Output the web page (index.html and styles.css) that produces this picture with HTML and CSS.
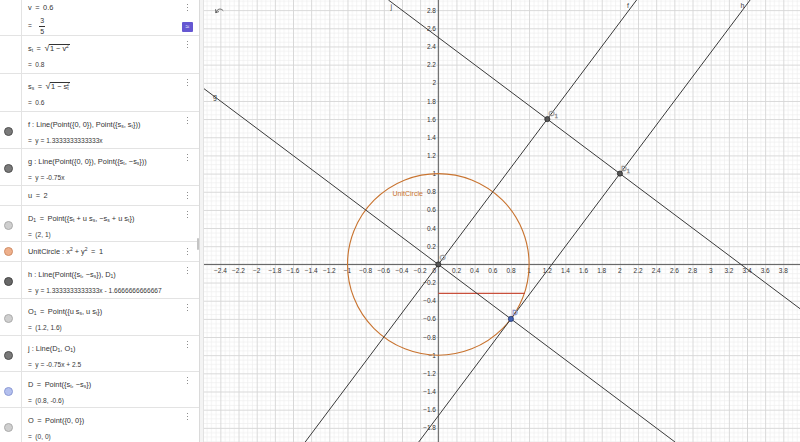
FILE: index.html
```html
<!DOCTYPE html>
<html>
<head>
<meta charset="utf-8">
<link rel="stylesheet" href="styles.css">
</head>
<body>
<div class="app">
  <div class="algebra">
    <div class="row r-first">
      <div class="marble"></div>
      <div class="content">
        <div class="line">v<span class="rel">=</span>0.6</div>
        <div class="line frac-line"><span class="eq">=</span><span class="frac"><span class="num">3</span><span class="den">5</span></span></div>
      </div>
      <div class="menu"><span class="dots"><i></i><i></i><i></i></span><span class="approx">≈</span></div>
    </div>
    <div class="row r-two r-tall">
      <div class="marble"></div>
      <div class="content">
        <div class="line">s<sub>t</sub><span class="rel">=</span><span class="sqrt"><span class="rad">√</span><span class="radicand">1 − v<sup>2</sup></span></span></div>
        <div class="line val"><span class="eq">=</span>0.8</div>
      </div>
      <div class="menu"><span class="dots"><i></i><i></i><i></i></span></div>
    </div>
    <div class="row r-two r-tall">
      <div class="marble"></div>
      <div class="content">
        <div class="line">s<sub>s</sub><span class="rel">=</span><span class="sqrt"><span class="rad">√</span><span class="radicand">1 − s<sub class="subsup">t</sub><sup class="supsub">2</sup></span></span></div>
        <div class="line val"><span class="eq">=</span>0.6</div>
      </div>
      <div class="menu"><span class="dots"><i></i><i></i><i></i></span></div>
    </div>
    <div class="row r-two">
      <div class="marble"><i class="m-dark"></i></div>
      <div class="content">
        <div class="line">f : Line(Point({0, 0}), Point({s<sub>s</sub>, s<sub>t</sub>}))</div>
        <div class="line val"><span class="eq">=</span>y = 1.3333333333333x</div>
      </div>
      <div class="menu"><span class="dots"><i></i><i></i><i></i></span></div>
    </div>
    <div class="row r-two">
      <div class="marble"><i class="m-dark"></i></div>
      <div class="content">
        <div class="line">g : Line(Point({0, 0}), Point({s<sub>t</sub>, −s<sub>s</sub>}))</div>
        <div class="line val"><span class="eq">=</span>y = -0.75x</div>
      </div>
      <div class="menu"><span class="dots"><i></i><i></i><i></i></span></div>
    </div>
    <div class="row r-one">
      <div class="marble"></div>
      <div class="content">
        <div class="line">u<span class="rel">=</span>2</div>
      </div>
      <div class="menu"><span class="dots"><i></i><i></i><i></i></span></div>
    </div>
    <div class="row r-two r-short">
      <div class="marble"><i class="m-light"></i></div>
      <div class="content">
        <div class="line">D<sub>1</sub><span class="rel">=</span>Point({s<sub>t</sub> + u s<sub>s</sub>, −s<sub>s</sub> + u s<sub>t</sub>})</div>
        <div class="line val"><span class="eq">=</span>(2, 1)</div>
      </div>
      <div class="menu"><span class="dots"><i></i><i></i><i></i></span></div>
    </div>
    <div class="row r-one">
      <div class="marble"><i class="m-orange"></i></div>
      <div class="content">
        <div class="line">UnitCircle : x<sup>2</sup> + y<sup>2</sup><span class="rel">=</span>1</div>
      </div>
      <div class="menu"><span class="dots"><i></i><i></i><i></i></span></div>
    </div>
    <div class="row r-two">
      <div class="marble"><i class="m-darker"></i></div>
      <div class="content">
        <div class="line">h : Line(Point({s<sub>t</sub>, −s<sub>s</sub>}), D<sub>1</sub>)</div>
        <div class="line val"><span class="eq">=</span>y = 1.3333333333333x - 1.6666666666667</div>
      </div>
      <div class="menu"><span class="dots"><i></i><i></i><i></i></span></div>
    </div>
    <div class="row r-two">
      <div class="marble"><i class="m-light"></i></div>
      <div class="content">
        <div class="line">O<sub>1</sub><span class="rel">=</span>Point({u s<sub>s</sub>, u s<sub>t</sub>})</div>
        <div class="line val"><span class="eq">=</span>(1.2, 1.6)</div>
      </div>
      <div class="menu"><span class="dots"><i></i><i></i><i></i></span></div>
    </div>
    <div class="row r-two r-short">
      <div class="marble"><i class="m-dark"></i></div>
      <div class="content">
        <div class="line">j : Line(D<sub>1</sub>, O<sub>1</sub>)</div>
        <div class="line val"><span class="eq">=</span>y = -0.75x + 2.5</div>
      </div>
      <div class="menu"><span class="dots"><i></i><i></i><i></i></span></div>
    </div>
    <div class="row r-two r-short">
      <div class="marble"><i class="m-blue"></i></div>
      <div class="content">
        <div class="line">D<span class="rel">=</span>Point({s<sub>t</sub>, −s<sub>s</sub>})</div>
        <div class="line val"><span class="eq">=</span>(0.8, -0.6)</div>
      </div>
      <div class="menu"><span class="dots"><i></i><i></i><i></i></span></div>
    </div>
    <div class="row r-two r-last">
      <div class="marble"><i class="m-light"></i></div>
      <div class="content">
        <div class="line">O<span class="rel">=</span>Point({0, 0})</div>
        <div class="line val"><span class="eq">=</span>(0, 0)</div>
      </div>
      <div class="menu"><span class="dots"><i></i><i></i><i></i></span></div>
    </div>
    <span class="scroll-thumb"></span>
  </div>
  <div class="divider"></div>
  <div class="graphics">
    <svg class="plot" width="596" height="442" viewBox="204 0 596 442" xmlns="http://www.w3.org/2000/svg">
      <defs>
        <pattern id="grid" patternUnits="userSpaceOnUse" x="438.3" y="264.4" width="18.16" height="18.16">
          <rect x="4.54" y="0" width="0.6" height="18.16" fill="#ececec"/>
          <rect x="9.08" y="0" width="0.6" height="18.16" fill="#ececec"/>
          <rect x="13.62" y="0" width="0.6" height="18.16" fill="#ececec"/>
          <rect x="0" y="4.54" width="18.16" height="0.6" fill="#ececec"/>
          <rect x="0" y="9.08" width="18.16" height="0.6" fill="#ececec"/>
          <rect x="0" y="13.62" width="18.16" height="0.6" fill="#ececec"/>
          <rect x="0" y="0" width="0.9" height="18.16" fill="#d6d6d6"/>
          <rect x="0" y="0" width="18.16" height="0.9" fill="#d6d6d6"/>
        </pattern>
      </defs>
      <rect x="204" y="0" width="596" height="442" fill="#fff"/>
      <rect x="204" y="0" width="596" height="442" fill="url(#grid)"/>

      <line class="axis" x1="204" y1="264.4" x2="800" y2="264.4"/>
      <line class="axis" x1="438.3" y1="0" x2="438.3" y2="442"/>

      <g class="xlab">
        <text x="220.4" y="270">−2.4</text>
        <text x="238.5" y="270">−2.2</text>
        <text x="256.7" y="270">−2</text>
        <text x="274.9" y="270">−1.8</text>
        <text x="293.0" y="270">−1.6</text>
        <text x="311.2" y="270">−1.4</text>
        <text x="329.3" y="270">−1.2</text>
        <text x="347.5" y="270">−1</text>
        <text x="365.7" y="270">−0.8</text>
        <text x="383.8" y="270">−0.6</text>
        <text x="402.0" y="270">−0.4</text>
        <text x="420.1" y="270">−0.2</text>
        <text x="456.5" y="270">0.2</text>
        <text x="474.6" y="270">0.4</text>
        <text x="492.8" y="270">0.6</text>
        <text x="511.0" y="270">0.8</text>
        <text x="529.1" y="270">1</text>
        <text x="547.3" y="270">1.2</text>
        <text x="565.4" y="270">1.4</text>
        <text x="583.6" y="270">1.6</text>
        <text x="601.7" y="270">1.8</text>
        <text x="619.9" y="270">2</text>
        <text x="638.1" y="270">2.2</text>
        <text x="656.2" y="270">2.4</text>
        <text x="674.4" y="270">2.6</text>
        <text x="692.5" y="270">2.8</text>
        <text x="710.7" y="270">3</text>
        <text x="728.9" y="270">3.2</text>
        <text x="747.0" y="270">3.4</text>
        <text x="765.2" y="270">3.6</text>
        <text x="783.3" y="270">3.8</text>
      </g>
      <g class="ylab">
        <text x="436" y="270">0</text>
        <text x="436" y="10.2">2.8</text>
        <text x="436" y="28.3">2.6</text>
        <text x="436" y="46.5">2.4</text>
        <text x="436" y="64.6">2.2</text>
        <text x="436" y="82.8">2</text>
        <text x="436" y="101.0">1.8</text>
        <text x="436" y="119.1">1.6</text>
        <text x="436" y="137.3">1.4</text>
        <text x="436" y="155.4">1.2</text>
        <text x="436" y="173.6">1</text>
        <text x="436" y="191.8">0.8</text>
        <text x="436" y="209.9">0.6</text>
        <text x="436" y="228.1">0.4</text>
        <text x="436" y="246.2">0.2</text>
        <text x="436" y="282.6">−0.2</text>
        <text x="436" y="300.7">−0.4</text>
        <text x="436" y="318.9">−0.6</text>
        <text x="436" y="337.0">−0.8</text>
        <text x="436" y="355.2">−1</text>
        <text x="436" y="373.4">−1.2</text>
        <text x="436" y="391.5">−1.4</text>
        <text x="436" y="409.7">−1.6</text>
        <text x="436" y="427.8">−1.8</text>
      </g>

      <circle class="unit" cx="438.3" cy="264.4" r="90.8"/>
      <line class="seg" x1="438.3" y1="293.4" x2="525" y2="293.4"/>

      <line class="ln" x1="636.6" y1="0" x2="305.2" y2="442"/>
      <line class="ln" x1="204" y1="88.7" x2="675" y2="442"/>
      <line class="ln" x1="750.1" y1="0" x2="418.7" y2="442"/>
      <line class="ln" x1="388.4" y1="0" x2="800" y2="308.7"/>

      <text class="lnlab" x="627" y="8">f</text>
      <text class="lnlab" x="740.5" y="8">h</text>
      <text class="lnlab" x="390.5" y="9">j</text>
      <text class="lnlab" x="213" y="99">g</text>

      <text class="circlab" x="392.5" y="196">UnitCircle</text>

      <path class="undo" d="M216 12.5 C217 8.5 221 8 223 10.5 M216 12.5 L215.6 9.6 M216 12.5 L218.6 11.7"/>

      <circle class="pt" cx="438.3" cy="264.4" r="2.6"/>
      <circle class="pt" cx="547.3" cy="119.1" r="2.6"/>
      <circle class="pt" cx="619.9" cy="173.6" r="2.6"/>
      <circle class="pt pt-blue" cx="510.9" cy="318.9" r="2.6"/>

      <text class="ptlab" x="439.5" y="259.5">O</text>
      <text class="ptlab" x="548.5" y="116">O<tspan class="psub" dy="2">1</tspan></text>
      <text class="ptlab" x="621" y="170.5">D<tspan class="psub" dy="2">1</tspan></text>
      <text class="ptlab ptlab-blue" x="512" y="315">D</text>
    </svg>
  </div>
</div>
</body>
</html>
```
FILE: styles.css
```css
html, body {
  margin: 0;
  padding: 0;
  width: 800px;
  height: 442px;
  overflow: hidden;
  background: #fff;
  font-family: "Liberation Sans", Arial, sans-serif;
}

.app {
  display: flex;
  width: 800px;
  height: 442px;
}

.algebra {
  width: 200px;
  flex: none;
  position: relative;
  overflow: hidden;
  border-right: 1px solid #dadada;
  box-sizing: border-box;
}

.divider {
  width: 4px;
  flex: none;
  background: #f4f4f4;
  border-right: 1px solid #e2e2e2;
  box-sizing: border-box;
}

.graphics {
  flex: 1;
  overflow: hidden;
}

.plot {
  display: block;
}

.row {
  display: flex;
  box-sizing: border-box;
  border-bottom: 1px solid #e3e3e3;
  height: 37px;
}

.r-first { height: 36px; }
.r-tall { height: 38px; }
.r-short { height: 36px; }
.r-one { height: 20px; }
.r-last { height: 40px; border-bottom: none; }

.marble {
  width: 22px;
  flex: none;
  box-sizing: border-box;
  border-right: 1px solid #e3e3e3;
  position: relative;
}

.marble i {
  position: absolute;
  left: 4px;
  top: 15px;
  width: 9px;
  height: 9px;
  box-sizing: border-box;
  border-radius: 50%;
  border: 1px solid #555;
}

.r-one .marble i { top: 5px; }

.m-dark { background: #7a7a7a; border-color: #505050 !important; }
.m-darker { background: #686868; border-color: #444 !important; }
.m-light { background: #cfcfcf; border-color: #ababab !important; }
.m-orange { background: #eeb08c; border-color: #d08d66 !important; }
.m-blue { background: #b4c0ee; border-color: #8c9ad4 !important; }

.content {
  flex: 1;
  min-width: 0;
  padding: 5px 0 0 6px;
  font-size: 7.4px;
  color: #333;
  white-space: nowrap;
}

.r-first .content { padding-top: 0; }
.r-one .content { padding-top: 2px; }

.line {
  height: 16px;
  line-height: 16px;
}

.line.val {
  font-size: 6.6px;
  color: #383838;
}

.rel {
  margin: 0 3.5px;
}

.eq {
  margin-right: 3.5px;
}

.line sub, .line sup {
  font-size: 5px;
  line-height: 0;
}

.line sub { vertical-align: -1px; }
.line sup { vertical-align: 3px; }

.frac-line {
  height: 20px;
  display: flex;
  align-items: center;
  gap: 4px;
  font-size: 6.6px;
}

.frac {
  display: inline-flex;
  flex-direction: column;
  align-items: center;
  line-height: 8px;
  font-size: 7px;
}

.frac .num {
  border-bottom: 0.8px solid #333;
  padding: 0 1px 1px;
}

.frac .den { padding-top: 1px; }

.sqrt {
  display: inline-flex;
  align-items: flex-end;
}

.rad {
  font-size: 9px;
  line-height: 9px;
  margin-right: -0.5px;
}

.radicand {
  border-top: 0.8px solid #333;
  line-height: 8px;
  padding: 0 1px 0 1px;
}

.radicand .subsup { vertical-align: -1px; }
.radicand .supsub { margin-left: -2px; vertical-align: 3px; }

.menu {
  width: 22px;
  flex: none;
  position: relative;
}

.dots {
  position: absolute;
  left: 10px;
  top: 5px;
  display: flex;
  flex-direction: column;
  gap: 1.6px;
}

.r-first .dots { top: 4px; }
.r-one .dots { top: 6px; }

.dots i {
  width: 1.4px;
  height: 1.4px;
  border-radius: 50%;
  background: #6a6a6a;
}

.approx {
  position: absolute;
  left: 5px;
  top: 22px;
  width: 11px;
  height: 10px;
  background: #6557d2;
  border-radius: 1px;
  color: #fff;
  font-size: 7px;
  line-height: 10px;
  text-align: center;
}

.scroll-thumb {
  position: absolute;
  right: 0;
  top: 238px;
  width: 2px;
  height: 12px;
  background: #c4c4c4;
  border-radius: 1px;
}

/* graphics */
.axis {
  stroke: #4a4a4a;
  stroke-width: 0.9;
}

.xlab text, .ylab text {
  font-family: "Liberation Sans", Arial, sans-serif;
  font-size: 6.5px;
  fill: #333;
  dominant-baseline: central;
}

.xlab text { text-anchor: middle; }
.ylab text { text-anchor: end; }

.unit {
  fill: none;
  stroke: #c8732f;
  stroke-width: 1.1;
}

.seg {
  stroke: #c9503c;
  stroke-width: 1.1;
}

.ln {
  stroke: #3a3a3a;
  stroke-width: 1;
}

.lnlab {
  font-family: "Liberation Sans", Arial, sans-serif;
  font-size: 7px;
  fill: #444;
}

.circlab {
  font-family: "Liberation Sans", Arial, sans-serif;
  font-size: 7px;
  fill: #c8732f;
}

.undo {
  fill: none;
  stroke: #555;
  stroke-width: 0.9;
  stroke-linecap: round;
}

.pt {
  fill: #555;
  stroke: #222;
  stroke-width: 0.7;
}

.pt-blue {
  fill: #3f5fae;
  stroke: #1f2f66;
}

.ptlab {
  font-family: "Liberation Sans", Arial, sans-serif;
  font-size: 8px;
  fill: #d0d0d0;
  stroke: #8a8a8a;
  stroke-width: 0.4;
}

.ptlab-blue {
  fill: #c9d2f2;
  stroke: #7d8bc4;
}

.psub {
  font-size: 5.5px;
}
```
